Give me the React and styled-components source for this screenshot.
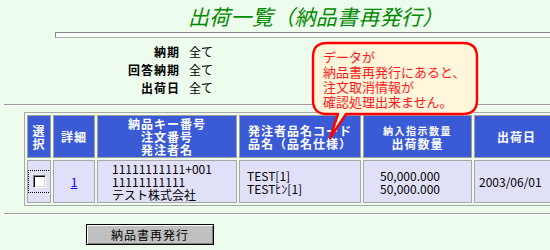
import React from "react";
import styled, { createGlobalStyle } from "styled-components";

const GlobalStyle = createGlobalStyle`
  html, body {
    margin: 0;
    padding: 0;
    background: #eefcee;
    overflow: hidden;
  }
  body {
    font-family: "Noto Sans CJK JP", "Noto Sans", sans-serif;
    font-size: 12px;
    color: #000;
  }
  * { box-sizing: border-box; }
`;

const Page = styled.div`
  position: relative;
  width: 550px;
  height: 250px;
  overflow: hidden;
  display: flex;
  flex-direction: column;
  background: #eefcee;
`;

const Title = styled.h1`
  margin: 3px 0 0 188px;
  font-size: 21px;
  line-height: 26px;
  font-weight: normal;
  font-style: italic;
  letter-spacing: 0.3px;
  color: #008a00;
  white-space: nowrap;
`;

const TitleRule = styled.div`
  margin: 3px 0 0 55px;
  width: 520px;
  height: 6px;
  border: 1px solid;
  border-color: #888 #c8c8c8 #b0b0b0 #888;
  background: #f8fff8;
`;

const InfoGrid = styled.div`
  margin-top: 5px;
  display: grid;
  grid-template-columns: 180px auto;
  grid-auto-rows: 18px;
  column-gap: 9px;
  align-items: center;
`;

const InfoLabel = styled.div`
  text-align: right;
  font-weight: bold;
  letter-spacing: 1px;
  line-height: 18px;
`;

const InfoValue = styled.div`
  line-height: 18px;
`;

const Rule = styled.div`
  margin: ${(p) => p.$top}px 0 0 4px;
  width: 560px;
  height: 2px;
  border-top: 1px solid #9a9a9a;
  border-bottom: 1px solid #ffffff;
`;

const ListTable = styled.table`
  margin: 6px 0 0 24px;
  border: 1px solid #a8a8a8;
  border-collapse: separate;
  border-spacing: 2px;
  table-layout: fixed;
  width: 538px;
  flex-shrink: 0;
`;

const Row = styled.tr`
  height: 43px;
`;

const HeadCell = styled.th`
  width: ${(p) => p.$w}px;
  padding: 0;
  background-color: #3b5bd6;
  background-image: radial-gradient(rgba(255, 255, 255, 0.07) 0.6px, transparent 0.7px);
  background-size: 2px 2px;
  border: 1px solid #a0a0a0;
  color: #fff;
  font-weight: bold;
  font-size: 12px;
  line-height: 13px;
  letter-spacing: 1px;
  text-align: center;
  vertical-align: middle;
  white-space: nowrap;
  overflow: hidden;
`;

const SmallLine = styled.span`
  display: block;
  font-size: 10px;
  line-height: 13px;
  letter-spacing: 1.5px;
`;

const DataCell = styled.td`
  padding: 0 0 0 ${(p) => p.$pad || 0}px;
  background: #e0e0f8;
  border: 1px solid #a8a8a8;
  font-size: 12px;
  line-height: 13px;
  text-align: ${(p) => p.$align || "left"};
  vertical-align: middle;
  white-space: nowrap;
  overflow: hidden;
`;

const CheckFrame = styled.span`
  display: inline-flex;
  align-items: center;
  justify-content: center;
  width: 23px;
  height: 23px;
  border: 1px dotted #000;
  vertical-align: middle;
`;

const CheckBox = styled.span`
  display: block;
  width: 13px;
  height: 13px;
  background: #fff;
  border: 1px solid;
  border-color: #808080 #ffffff #ffffff #808080;
  box-shadow: inset 1px 1px 0 #000, inset -1px -1px 0 #d8d8d8;
`;

const DetailLink = styled.a`
  color: #0000ee;
  text-decoration: underline;
  font-size: 12px;
`;

const ActionButton = styled.button`
  margin: 9px 0 0 86px;
  width: 128px;
  height: 21px;
  padding: 0;
  font-family: "Noto Sans CJK JP", "Noto Sans", sans-serif;
  font-size: 12px;
  line-height: 18px;
  letter-spacing: 1px;
  color: #000;
  background: #c0c0c0;
  border: 1px solid #000;
  box-shadow: inset 1px 1px 0 #ffffff, inset -1px -1px 0 #808080;
  flex-shrink: 0;
`;

const Bubble = styled.div`
  position: absolute;
  left: 311px;
  top: 41px;
  width: 170px;
  height: 100px;
  pointer-events: none;
`;

const BubbleShape = styled.svg`
  position: absolute;
  left: 0;
  top: 0;
  overflow: visible;
`;

const BubbleText = styled.div`
  position: relative;
  padding: 8px 0 0 12px;
  color: #ff1a1a;
  font-size: 13px;
  line-height: 15px;
  white-space: nowrap;
`;

export default function App() {
  return (
    <>
      <GlobalStyle />
      <Page>
        <Title>出荷一覧（納品書再発行）</Title>
        <TitleRule />
        <InfoGrid>
          <InfoLabel>納期</InfoLabel>
          <InfoValue>全て</InfoValue>
          <InfoLabel>回答納期</InfoLabel>
          <InfoValue>全て</InfoValue>
          <InfoLabel>出荷日</InfoLabel>
          <InfoValue>全て</InfoValue>
        </InfoGrid>
        <Rule $top={7} />
        <ListTable>
          <tbody>
            <Row>
              <HeadCell $w={24}>
                選<br />択
              </HeadCell>
              <HeadCell $w={42}>詳細</HeadCell>
              <HeadCell $w={140}>
                納品キー番号<br />注文番号<br />発注者名
              </HeadCell>
              <HeadCell $w={122}>
                発注者品名コード<br />品名（品名仕様）
              </HeadCell>
              <HeadCell $w={109}>
                <SmallLine>納入指示数量</SmallLine>
                出荷数量
              </HeadCell>
              <HeadCell $w={85}>出荷日</HeadCell>
            </Row>
            <Row>
              <DataCell $align="center">
                <CheckFrame>
                  <CheckBox />
                </CheckFrame>
              </DataCell>
              <DataCell $align="center">
                <DetailLink href="#">1</DetailLink>
              </DataCell>
              <DataCell $pad={14}>
                11111111111+001<br />11111111111<br />テスト株式会社
              </DataCell>
              <DataCell $pad={7}>
                TEST[1]<br />TESTﾋﾝ[1]
              </DataCell>
              <DataCell $pad={16}>
                50,000.000<br />50,000.000
              </DataCell>
              <DataCell $pad={4}>2003/06/01</DataCell>
            </Row>
          </tbody>
        </ListTable>
        <Rule $top={7} />
        <ActionButton type="button">納品書再発行</ActionButton>
        <Bubble>
          <BubbleShape width="170" height="100" viewBox="0 0 170 100">
            <path
              d="M 16 2 H 152 Q 166 2 166 16 V 59 Q 166 73 152 73 H 35 L 19 97 L 27 73 H 16 Q 2 73 2 59 V 16 Q 2 2 16 2 Z"
              fill="#fff6dc"
              stroke="#ff0000"
              strokeWidth="2.4"
              strokeLinejoin="round"
            />
          </BubbleShape>
          <BubbleText>
            データが
            <br />
            納品書再発行にあると、
            <br />
            注文取消情報が
            <br />
            確認処理出来ません。
          </BubbleText>
        </Bubble>
      </Page>
    </>
  );
}
